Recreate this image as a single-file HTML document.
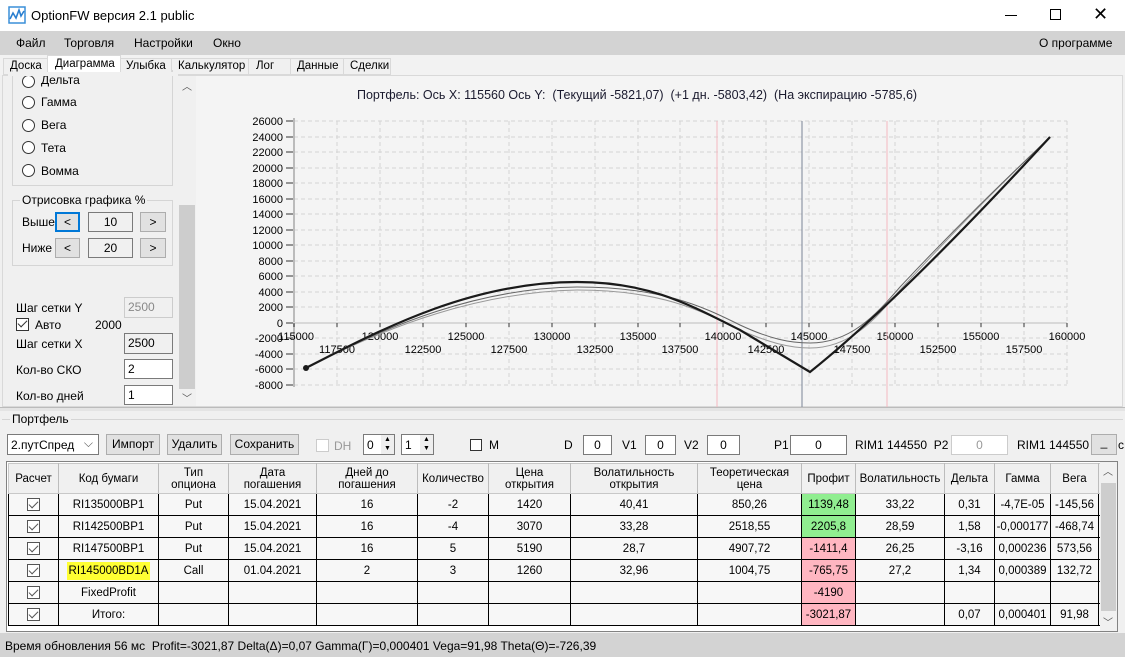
<!DOCTYPE html>
<html><head><meta charset="utf-8">
<style>
*{box-sizing:border-box;margin:0;padding:0}
body{width:1125px;height:657px;overflow:hidden;background:#f0f0f0;font-family:"Liberation Sans",sans-serif;font-size:12px;color:#000;position:relative}
.a{position:absolute}
.btn{position:absolute;background:#e1e1e1;border:1px solid #adadad;text-align:center;font-size:12px;line-height:19px}
.tb{position:absolute;background:#fff;border:1px solid #7a7a7a;text-align:center;line-height:19px;font-size:12px}
.radio{position:absolute;width:13px;height:13px;border:1px solid #333;border-radius:50%;background:#fff}
.lbl{position:absolute;font-size:12px}
table{border-collapse:collapse;table-layout:fixed;font-size:11.5px}
td{border:1px solid #000;height:22px;text-align:center;background:#f7f7f7;white-space:nowrap;overflow:hidden}
th{border:1px solid #c8c8c8;border-right:1px solid #bcbcbc;height:30px;font-weight:normal;background:#f0f0f0;line-height:12px;font-size:11.5px}
.cb{display:inline-block;width:13px;height:13px;border:1px solid #555;background:#fff;position:relative;vertical-align:middle}
.cb:after{content:"";position:absolute;left:3px;top:0px;width:4px;height:8px;border:solid #555;border-width:0 1.5px 1.5px 0;transform:rotate(45deg)}
.g{background:#90ee90}.p{background:#ffb6c1}
</style></head><body>
<div class="a" style="left:0;top:0;width:1125px;height:31px;background:#fff"></div>
<svg class="a" style="left:8px;top:6px" width="18" height="18" viewBox="0 0 18 18"><rect x="1" y="1" width="16" height="16" fill="none" stroke="#3a8fd8" stroke-width="1.5"/><path d="M2,13 L5,7 L8,12 L11,4 L13,10 L16,5" fill="none" stroke="#2a7fd0" stroke-width="1.6"/></svg>
<div class="lbl" style="left:31px;top:8px;font-size:13px">OptionFW версия 2.1 public</div>
<div class="a" style="left:1005px;top:15px;width:12px;height:1px;background:#000"></div>
<div class="a" style="left:1050px;top:9px;width:11px;height:11px;border:1px solid #000"></div>
<div class="lbl" style="left:1093px;top:4px;font-size:18px;font-weight:300">✕</div>
<div class="a" style="left:0;top:31px;width:1125px;height:24px;background:#d3d3d3"></div>
<div class="lbl" style="left:16px;top:36px">Файл</div>
<div class="lbl" style="left:64px;top:36px">Торговля</div>
<div class="lbl" style="left:134px;top:36px">Настройки</div>
<div class="lbl" style="left:213px;top:36px">Окно</div>
<div class="lbl" style="left:1039px;top:36px">О программе</div>
<div class="a" style="left:0;top:55px;width:1125px;height:20px;background:#f2f2f2"></div>
<div class="a" style="left:3px;top:58px;width:388px;height:17px;background:#f0f0f0;border:1px solid #d9d9d9"></div>
<div class="lbl" style="left:10px;top:60px;font-size:11.5px">Доска</div>
<div class="a" style="left:47px;top:55px;width:74px;height:21px;background:#fff;border:1px solid #d9d9d9;border-bottom:none"></div>
<div class="lbl" style="left:55px;top:58px;font-size:11.5px">Диаграмма</div>
<div class="lbl" style="left:126px;top:60px;font-size:11.5px">Улыбка</div>
<div class="a" style="left:171px;top:58px;width:1px;height:17px;background:#d9d9d9"></div>
<div class="lbl" style="left:178px;top:60px;font-size:11.5px">Калькулятор</div>
<div class="a" style="left:248px;top:58px;width:1px;height:17px;background:#d9d9d9"></div>
<div class="lbl" style="left:256px;top:60px;font-size:11.5px">Лог</div>
<div class="a" style="left:290px;top:58px;width:1px;height:17px;background:#d9d9d9"></div>
<div class="lbl" style="left:297px;top:60px;font-size:11.5px">Данные</div>
<div class="a" style="left:343px;top:58px;width:1px;height:17px;background:#d9d9d9"></div>
<div class="lbl" style="left:350px;top:60px;font-size:11.5px">Сделки</div>
<div class="a" style="left:2px;top:75px;width:1121px;height:332px;background:#f0f0f0;border:1px solid #d9d9d9"></div>
<div class="a" style="left:12px;top:70px;width:161px;height:116px;border:1px solid #d5d5d5;border-top:none"></div>
<div class="radio" style="left:22px;top:75px"></div><div class="lbl" style="left:41px;top:73px">Дельта</div>
<div class="a" style="left:8px;top:72px;width:170px;height:4px;background:#f0f0f0"></div>
<div class="radio" style="left:22px;top:96px"></div><div class="lbl" style="left:41px;top:95px">Гамма</div>
<div class="radio" style="left:22px;top:119px"></div><div class="lbl" style="left:41px;top:118px">Вега</div>
<div class="radio" style="left:22px;top:141px"></div><div class="lbl" style="left:41px;top:141px">Тета</div>
<div class="radio" style="left:22px;top:164px"></div><div class="lbl" style="left:41px;top:164px">Вомма</div>
<div class="a" style="left:12px;top:200px;width:161px;height:66px;border:1px solid #d5d5d5"></div>
<div class="lbl" style="left:20px;top:193px;background:#f0f0f0;padding:0 2px">Отрисовка графика %</div>
<div class="lbl" style="left:22px;top:215px">Выше</div>
<div class="btn" style="left:55px;top:212px;width:25px;height:20px;border:2px solid #0078d7;line-height:16px">&lt;</div>
<div class="btn" style="left:88px;top:212px;width:45px;height:20px;background:#f0f0f0;border-color:#7a7a7a">10</div>
<div class="btn" style="left:140px;top:212px;width:26px;height:20px">&gt;</div>
<div class="lbl" style="left:22px;top:241px">Ниже</div>
<div class="btn" style="left:55px;top:238px;width:25px;height:20px">&lt;</div>
<div class="btn" style="left:88px;top:238px;width:45px;height:20px;background:#f0f0f0;border-color:#7a7a7a">20</div>
<div class="btn" style="left:140px;top:238px;width:26px;height:20px">&gt;</div>
<div class="lbl" style="left:16px;top:301px">Шаг сетки Y</div>
<div class="tb" style="left:124px;top:297px;width:49px;height:21px;background:#f0f0f0;border-color:#ccc;color:#888;text-align:left;padding-left:3px">2500</div>
<div class="a" style="left:16px;top:318px;width:13px;height:13px;border:1px solid #333;background:#fff"></div>
<div class="a" style="left:20px;top:318px;width:5px;height:9px;border:solid #333;border-width:0 1.5px 1.5px 0;transform:rotate(45deg)"></div>
<div class="lbl" style="left:35px;top:318px">Авто</div>
<div class="lbl" style="left:95px;top:318px">2000</div>
<div class="lbl" style="left:16px;top:337px">Шаг сетки X</div>
<div class="tb" style="left:124px;top:333px;width:49px;height:21px;background:#f0f0f0;text-align:left;padding-left:3px">2500</div>
<div class="lbl" style="left:16px;top:363px">Кол-во СКО</div>
<div class="tb" style="left:124px;top:359px;width:49px;height:20px;text-align:left;padding-left:3px">2</div>
<div class="lbl" style="left:16px;top:389px">Кол-во дней</div>
<div class="tb" style="left:124px;top:385px;width:49px;height:20px;text-align:left;padding-left:3px">1</div>
<div class="a" style="left:179px;top:76px;width:16px;height:330px;background:#f0f0f0"></div>
<div class="a" style="left:179px;top:205px;width:16px;height:184px;background:#cdcdcd"></div>
<div class="lbl" style="left:182px;top:78px;font-size:10px;color:#555">︿</div>
<div class="lbl" style="left:182px;top:390px;font-size:10px;color:#555">﹀</div>
<div class="a" style="left:196px;top:76px;width:926px;height:330px;background:#f4f4f4"></div>
<div class="lbl" style="left:357px;top:88px;font-size:12.5px;color:#1a1a2e">Портфель: Ось X: 115560 Ось Y:&nbsp; (Текущий -5821,07)&nbsp; (+1 дн. -5803,42)&nbsp; (На экспирацию -5785,6)</div>
<svg class="a" style="left:0;top:0" width="1125" height="420" font-family="Liberation Sans" font-size="11">
<g stroke="#d4d4d4" stroke-dasharray="4,3" stroke-width="1">
<path d="M294,121H1067M294,137H1067M294,152H1067M294,168H1067M294,183H1067M294,199H1067M294,214H1067M294,230H1067M294,245H1067M294,261H1067M294,276H1067M294,292H1067M294,307H1067M294,338H1067M294,354H1067M294,369H1067M294,385H1067"/>
<path d="M337,121V385M380,121V385M423,121V385M466,121V385M509,121V385M552,121V385M595,121V385M638,121V385M680,121V385M723,121V385M766,121V385M809,121V385M852,121V385M895,121V385M938,121V385M981,121V385M1024,121V385M1067,121V385"/>
</g>
<path d="M294,118V387" stroke="#bbb" stroke-width="2"/>
<path d="M293,323H1067" stroke="#d8d8d8" stroke-width="2"/>
<g stroke="#333"><path d="M286,121H293M286,137H293M286,152H293M286,168H293M286,183H293M286,199H293M286,214H293M286,230H293M286,245H293M286,261H293M286,276H293M286,292H293M286,307H293M286,323H293M286,338H293M286,354H293M286,369H293M286,385H293"/>
<path d="M294,323V327M337,323V327M380,323V327M423,323V327M466,323V327M509,323V327M552,323V327M595,323V327M638,323V327M680,323V327M723,323V327M766,323V327M809,323V327M852,323V327M895,323V327M938,323V327M981,323V327M1024,323V327M1067,323V327"/></g>
<g text-anchor="end" fill="#000">
<text x="283" y="125">26000</text><text x="283" y="141">24000</text><text x="283" y="156">22000</text><text x="283" y="172">20000</text><text x="283" y="187">18000</text><text x="283" y="203">16000</text><text x="283" y="218">14000</text><text x="283" y="234">12000</text><text x="283" y="249">10000</text><text x="283" y="265">8000</text><text x="283" y="280">6000</text><text x="283" y="296">4000</text><text x="283" y="311">2000</text><text x="283" y="327">0</text><text x="283" y="342">-2000</text><text x="283" y="358">-4000</text><text x="283" y="373">-6000</text><text x="283" y="389">-8000</text>
</g>
<g text-anchor="middle" fill="#000">
<text x="296" y="340">115000</text><text x="380" y="340">120000</text><text x="466" y="340">125000</text><text x="552" y="340">130000</text><text x="638" y="340">135000</text><text x="723" y="340">140000</text><text x="809" y="340">145000</text><text x="895" y="340">150000</text><text x="981" y="340">155000</text><text x="1067" y="340">160000</text>
<text x="337" y="353">117500</text><text x="423" y="353">122500</text><text x="509" y="353">127500</text><text x="595" y="353">132500</text><text x="680" y="353">137500</text><text x="766" y="353">142500</text><text x="852" y="353">147500</text><text x="938" y="353">152500</text><text x="1024" y="353">157500</text>
</g>
<path d="M717,121V408M887,121V408" stroke="#f4b8c0" stroke-width="1"/>
<path d="M802,121V408" stroke="#7a8596" stroke-width="1"/>
<path d="M306,368 C390,325 480,292 577,290 C660,290 700,310 740,330 C770,343 790,348 810,348 C850,348 875,320 900,290 C960,225 1000,185 1050,137" fill="none" stroke="#999" stroke-width="1"/>
<path d="M306,368 C390,324 480,288 577,287 C660,287 700,305 740,325 C770,339 790,343 810,343 C850,343 875,316 900,287 C960,223 1000,185 1050,137" fill="none" stroke="#666" stroke-width="1"/>
<path d="M306,368 C380,330 470,282 577,282 C650,282 690,305 740,330 L810,372 Q900,300 1050,137" fill="none" stroke="#1a1a1a" stroke-width="2.2"/>
<circle cx="306" cy="368" r="3" fill="#1a1a1a"/>
</svg>
<div class="a" style="left:0;top:407px;width:1125px;height:4px;background:#e4e4e4;border-top:1px solid #bbb"></div>
<div class="a" style="left:2px;top:419px;width:1121px;height:212px;border-top:1px solid #d5d5d5"></div>
<div class="lbl" style="left:10px;top:412px;background:#f0f0f0;padding:0 2px">Портфель</div>
<div class="a" style="left:7px;top:434px;width:92px;height:21px;background:#fff;border:1px solid #7a7a7a;padding:3px 0 0 3px">2.путСпред<span style="position:absolute;right:5px;top:1px;color:#555">⌵</span></div>
<div class="btn" style="left:106px;top:434px;width:54px;height:21px">Импорт</div>
<div class="btn" style="left:167px;top:434px;width:55px;height:21px">Удалить</div>
<div class="btn" style="left:230px;top:434px;width:69px;height:21px">Сохранить</div>
<div class="a" style="left:316px;top:439px;width:13px;height:13px;border:1px solid #ccc;background:#fff"></div>
<div class="lbl" style="left:334px;top:439px;color:#999">DH</div>
<div class="a" style="left:363px;top:434px;width:32px;height:21px;background:#fff;border:1px solid #7a7a7a;padding:3px 0 0 3px">0<span style="position:absolute;right:0;top:0;width:13px;height:19px;background:#eee;font-size:7px;line-height:9px;text-align:center">▲<br>▼</span></div>
<div class="a" style="left:401px;top:434px;width:33px;height:21px;background:#fff;border:1px solid #7a7a7a;padding:3px 0 0 3px">1<span style="position:absolute;right:0;top:0;width:13px;height:19px;background:#eee;font-size:7px;line-height:9px;text-align:center">▲<br>▼</span></div>
<div class="a" style="left:470px;top:439px;width:12px;height:12px;border:1px solid #333;background:#fff"></div>
<div class="lbl" style="left:489px;top:438px">M</div>
<div class="lbl" style="left:564px;top:438px">D</div>
<div class="tb" style="left:583px;top:435px;width:29px;height:20px">0</div>
<div class="lbl" style="left:622px;top:438px">V1</div>
<div class="tb" style="left:645px;top:435px;width:31px;height:20px">0</div>
<div class="lbl" style="left:684px;top:438px">V2</div>
<div class="tb" style="left:707px;top:435px;width:33px;height:20px">0</div>
<div class="lbl" style="left:774px;top:438px">P1</div>
<div class="tb" style="left:790px;top:435px;width:57px;height:20px">0</div>
<div class="lbl" style="left:855px;top:438px">RIM1 144550&nbsp; P2</div>
<div class="tb" style="left:951px;top:435px;width:57px;height:20px;border-color:#ccc;color:#999">0</div>
<div class="lbl" style="left:1017px;top:438px">RIM1 144550</div>
<div class="btn" style="left:1091px;top:434px;width:26px;height:21px;line-height:14px">_</div>
<div class="lbl" style="left:1118px;top:438px">c</div>
<div class="a" style="left:6px;top:461px;width:1112px;height:171px;background:#fff;border:1px solid #828282"></div>
<div class="a" style="left:8px;top:463px;width:1092px;height:167px;overflow:hidden">
<table style="width:1096px">
<colgroup><col style="width:50px"><col style="width:100px"><col style="width:70px"><col style="width:88px"><col style="width:101px"><col style="width:71px"><col style="width:82px"><col style="width:127px"><col style="width:104px"><col style="width:54px"><col style="width:89px"><col style="width:50px"><col style="width:56px"><col style="width:48px"><col style="width:6px"></colgroup>
<tr><th>Расчет</th><th>Код бумаги</th><th>Тип<br>опциона</th><th>Дата<br>погашения</th><th>Дней до<br>погашения</th><th>Количество</th><th>Цена<br>открытия</th><th>Волатильность<br>открытия</th><th>Теоретическая<br>цена</th><th>Профит</th><th>Волатильность</th><th>Дельта</th><th>Гамма</th><th>Вега</th><th></th></tr>
<tr><td><span class="cb"></span></td><td>RI135000BP1</td><td>Put</td><td>15.04.2021</td><td>16</td><td>-2</td><td>1420</td><td>40,41</td><td>850,26</td><td class="g">1139,48</td><td>33,22</td><td>0,31</td><td>-4,7E-05</td><td>-145,56</td><td></td></tr>
<tr><td><span class="cb"></span></td><td>RI142500BP1</td><td>Put</td><td>15.04.2021</td><td>16</td><td>-4</td><td>3070</td><td>33,28</td><td>2518,55</td><td class="g">2205,8</td><td>28,59</td><td>1,58</td><td>-0,000177</td><td>-468,74</td><td></td></tr>
<tr><td><span class="cb"></span></td><td>RI147500BP1</td><td>Put</td><td>15.04.2021</td><td>16</td><td>5</td><td>5190</td><td>28,7</td><td>4907,72</td><td class="p">-1411,4</td><td>26,25</td><td>-3,16</td><td>0,000236</td><td>573,56</td><td></td></tr>
<tr><td><span class="cb"></span></td><td><span style="background:#ffff33;padding:3px 2px">RI145000BD1A</span></td><td>Call</td><td>01.04.2021</td><td>2</td><td>3</td><td>1260</td><td>32,96</td><td>1004,75</td><td class="p">-765,75</td><td>27,2</td><td>1,34</td><td>0,000389</td><td>132,72</td><td></td></tr>
<tr><td><span class="cb"></span></td><td>FixedProfit</td><td></td><td></td><td></td><td></td><td></td><td></td><td></td><td class="p">-4190</td><td></td><td></td><td></td><td></td><td></td></tr>
<tr><td><span class="cb"></span></td><td>Итого:</td><td></td><td></td><td></td><td></td><td></td><td></td><td></td><td class="p">-3021,87</td><td></td><td>0,07</td><td>0,000401</td><td>91,98</td><td></td></tr>
</table></div>
<div class="a" style="left:1100px;top:462px;width:17px;height:169px;background:#f0f0f0"></div>
<div class="a" style="left:1101px;top:483px;width:15px;height:128px;background:#cdcdcd"></div>
<div class="lbl" style="left:1103px;top:463px;font-size:10px;color:#555">︿</div>
<div class="lbl" style="left:1103px;top:614px;font-size:10px;color:#555">﹀</div>
<div class="a" style="left:0;top:633px;width:1125px;height:24px;background:#d3d3d3"></div>
<div class="lbl" style="left:5px;top:639px">Время обновления 56 мс&nbsp; Profit=-3021,87 Delta(Δ)=0,07 Gamma(Γ)=0,000401 Vega=91,98 Theta(Θ)=-726,39</div>
</body></html>
